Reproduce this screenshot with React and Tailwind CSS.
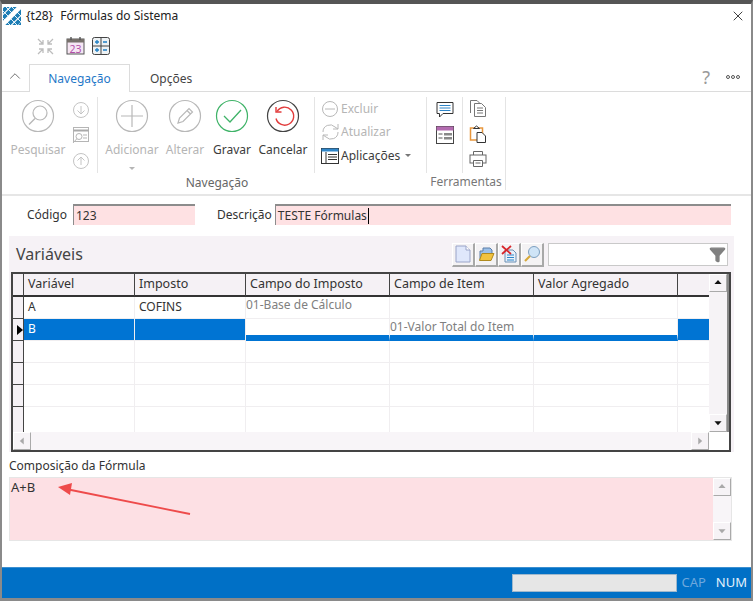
import React from 'react';
import { X, ChevronUp, Filter } from 'lucide-react';

const cols = 'grid grid-cols-[11px_111px_111px_144px_144px_144px_33px]';

// Round ribbon button with its drawing inside the ring
const RoundButton = ({ label, ring, muted, width, children }) => (
  <div className={`${width} flex flex-col items-center shrink-0`}>
    <svg width="34" height="34" viewBox="0 0 34 34" fill="none" className="mt-[6px]">
      <circle cx="17" cy="17" r="15.5" stroke={ring} strokeWidth="1.2" />
      {children}
    </svg>
    <span className={`mt-[9px] text-[12px] leading-[16px] whitespace-nowrap ${muted ? 'text-[#b5b5b5]' : 'text-[#3c3c3c]'}`}>{label}</span>
  </div>
);

const SmallRound = ({ up }) => (
  <svg width="18" height="18" viewBox="0 0 18 18" fill="none" stroke="#c4c4c4" strokeWidth="1">
    <circle cx="9" cy="9" r="7.5" />
    <path d={up ? 'M9 13V5M5.5 8.5 9 5l3.5 3.5' : 'M9 5v8M5.5 9.5 9 13l3.5-3.5'} />
  </svg>
);

const ToolButton = ({ children }) => (
  <div className="w-[23px] h-[24px] flex items-center justify-center bg-[#f4f2f4] border-r-2 border-b-2 border-[#a8a8a8] border-l border-t border-l-white border-t-white">
    {children}
  </div>
);

const HeaderCell = ({ children }) => (
  <div className="h-[23px] bg-[#f5f1f5] border-r border-[#444] border-b-2 border-b-[#333] flex items-center pl-[4px] text-[12.5px] text-[#333] whitespace-nowrap">
    {children}
  </div>
);

const Cell = ({ children, className = '' }) => (
  <div className={`h-[22px] border-r border-b border-[#f0eef0] text-[12px] whitespace-nowrap overflow-hidden ${className}`}>
    {children}
  </div>
);

const ScrollBtn = ({ dir, dark, className = '' }) => {
  const shape = {
    up: 'M5 10l4-4.5 4 4.5z',
    down: 'M5 7l4 4.5L13 7z',
    left: 'M11 5l-4.5 4 4.5 4z',
    right: 'M7 5l4.5 4L7 13z',
  }[dir];
  return (
    <div className={`w-[18px] h-[18px] shrink-0 bg-[#f6f3f6] border border-t-white border-l-white border-r-[#aaa] border-b-[#aaa] ${className}`}>
      <svg width="16" height="16" viewBox="0 0 18 18"><path d={shape} fill={dark ? '#111' : '#a9a9a9'} /></svg>
    </div>
  );
};

const rows = [
  { a: 'A', b: 'COFINS', c: '01-Base de Cálculo' },
  { a: 'B', d: '01-Valor Total do Item', selected: true },
  {}, {}, {},
];

export default function App() {
  return (
    <div className="w-[753px] h-[601px] flex flex-col bg-white border-l-2 border-r-2 border-[#8a8a8a] border-t-[4px] border-t-[#555] border-b-[3px] border-b-[#8a8a8a] overflow-hidden text-[#333] [font-family:'Noto_Sans',sans-serif]">
      {/* Title */}
      <div className="h-[24px] flex items-center shrink-0">
        <svg width="18" height="18" viewBox="0 0 18 18" className="ml-[1px]">
          <rect width="18" height="18" fill="#fff" />
          <path d="M-2 6 6-2M-2 13 13-2M3 20 20 3M10 20l10-10M16 20l4-4" stroke="#1b7cb4" strokeWidth="3.800" />
          <path d="M3 0l15 15M0 4l14 14M9 0l9 9M0 11l7 7" stroke="#fff" strokeWidth="0.900" />
        </svg>
        <span className="ml-[5px] text-[12px] whitespace-nowrap text-[#222]">{'{t28}'}</span>
        <span className="ml-[7px] text-[12px] whitespace-nowrap text-[#222]">Fórmulas do Sistema</span>
        <X size={16} strokeWidth={1.4} className="ml-auto mr-[5px] text-[#333]" />
      </div>

      {/* Quick access */}
      <div className="h-[36px] flex items-center pl-[35px] shrink-0">
        <svg width="17" height="17" viewBox="0 0 17 17" fill="none" stroke="#bdbdbd" strokeWidth="1.3">
          <path d="M1 1l5 5M6 2v4H2M16 1l-5 5M11 2v4h4M1 16l5-5M6 15v-4H2M16 16l-5-5M11 15v-4h4" />
        </svg>
        <svg width="19" height="18" viewBox="0 0 19 18" fill="none" className="ml-[12px]">
          <rect x="1" y="2" width="17" height="15" fill="#f6e6f4" stroke="#555" />
          <rect x="1" y="2" width="17" height="3.500" fill="#77706b" />
          <path d="M5 0v3M14 0v3" stroke="#555" strokeWidth="1.400" />
          <text x="9.500" y="15.500" textAnchor="middle" fontSize="10.500" fill="#b24fa8" fontFamily="Noto Sans">23</text>
        </svg>
        <svg width="18" height="18" viewBox="0 0 18 18" fill="none" className="ml-[7px]">
          <rect x="0.500" y="0.500" width="17" height="17" rx="2" fill="#eef2f4" stroke="#444" />
          <path d="M9 1v16M1 9h16" stroke="#444" />
          <path d="M3 5h4M5 3v4M11 5h4M3 13h4M5 11v4M11 13h4" stroke="#1f7fc4" strokeWidth="1.300" />
        </svg>
      </div>

      {/* Tabs */}
      <div className="h-[28px] flex items-end border-b border-[#dcdcdc] shrink-0 relative">
        <ChevronUp size={18} strokeWidth={1.1} className="ml-[4px] mb-[6px] text-[#555]" />
        <div className="ml-[5px] w-[101px] h-[28px] -mb-px bg-white border border-b-0 border-[#dcdcdc] flex items-center justify-center text-[12px] text-[#1f78c8]">Navegação</div>
        <div className="ml-[20px] h-[28px] pt-[3px] flex items-center text-[12px] text-[#444]">Opções</div>
        <div className="ml-auto mr-[11px] h-[28px] flex items-center gap-[16px]">
          <span className="text-[18px] text-[#9a9a9a]">?</span>
          <span className="flex gap-[1px]">
            <i className="w-[4px] h-[4px] rounded-full border border-[#555]" />
            <i className="w-[4px] h-[4px] rounded-full border border-[#555]" />
            <i className="w-[4px] h-[4px] rounded-full border border-[#555]" />
          </span>
        </div>
      </div>

      {/* Ribbon */}
      <div className="h-[104px] flex border-b-2 border-[#e6e6e6] shrink-0 relative">
        <div className="w-[424px] flex flex-col shrink-0">
          <div className="h-[83px] flex pt-[1px]">
            <RoundButton label="Pesquisar" ring="#b8b8b8" muted width="w-[58px] ml-[7px]">
              <circle cx="19" cy="14" r="7" stroke="#b8b8b8" strokeWidth="1.200" />
              <path d="M14 19.500 8 25.500" stroke="#b8b8b8" strokeWidth="1.400" />
            </RoundButton>
            <div className="w-[30px] pr-[2px] flex flex-col items-center pt-[8px] gap-[7px] shrink-0">
              <SmallRound />
              <svg width="18" height="19" viewBox="0 0 18 19" fill="none" stroke="#b5b5b5">
                <rect x="1.500" y="1.500" width="15" height="14" />
                <path d="M1.500 4.500h15" strokeWidth="2" stroke="#a9a9a9" />
                <circle cx="7" cy="10.500" r="3" />
                <path d="M4.800 12.800 1 17M11 9h4M11 12h4" />
              </svg>
              <SmallRound up />
            </div>
            <div className="w-px h-[76px] bg-[#e4e4e4] mt-[4px] shrink-0" />
            <div className="w-[68px] flex flex-col items-center shrink-0">
              <svg width="34" height="34" viewBox="0 0 34 34" fill="none" className="mt-[6px]">
                <circle cx="17" cy="17" r="15.500" stroke="#b8b8b8" strokeWidth="1.200" />
                <path d="M17 6v22M6 17h22" stroke="#b8b8b8" strokeWidth="1.200" />
              </svg>
              <span className="mt-[9px] text-[12px] leading-[16px] text-[#b5b5b5]">Adicionar</span>
              <svg width="6" height="3" viewBox="0 0 6 3" className="mt-[9px]"><path d="M0 0h6L3 3z" fill="#b5b5b5" /></svg>
            </div>
            <RoundButton label="Alterar" ring="#b8b8b8" muted width="w-[38px]">
              <path d="M10 24l1.500-5L21 9.500l3.500 3.500-9.500 9.500zM19 11.500l3.500 3.500" stroke="#b8b8b8" strokeWidth="1.200" />
            </RoundButton>
            <RoundButton label="Gravar" ring="#3fb368" width="w-[56px]">
              <path d="M9 17l6 6L26 11" stroke="#3fb368" strokeWidth="1.300" />
            </RoundButton>
            <RoundButton label="Cancelar" ring="#444" width="w-[46px]">
              <path d="M11 12.500a9 9 0 1 1-1 7" stroke="#e23b3b" strokeWidth="1.400" />
              <path d="M10 8v5h5.500" stroke="#e23b3b" strokeWidth="1.400" />
            </RoundButton>
            <div className="w-px h-[76px] bg-[#e4e4e4] mt-[4px] ml-[8px] shrink-0" />
            <div className="flex flex-col pl-[6px] pt-[6px] gap-[4px] text-[12px] leading-[19px] shrink-0">
              <div className="flex items-center gap-[2px] text-[#b5b5b5]">
                <svg width="18" height="18" viewBox="0 0 18 18" fill="none" stroke="#b8b8b8"><circle cx="9" cy="9" r="7.500" /><path d="M4 9h10" /></svg>
                Excluir
              </div>
              <div className="flex items-center gap-[1px] text-[#b5b5b5]">
                <svg width="19" height="18" viewBox="0 0 19 18" fill="none" stroke="#b8b8b8"><path d="M2 9a7 7 0 0 1 12-5l3 2M17 9a7 7 0 0 1-12 5l-3-2M17 1v5h-5M2 17v-5h5" /></svg>
                Atualizar
              </div>
              <div className="flex items-center gap-[2px] mt-[1px] text-[#3c3c3c]">
                <svg width="18" height="16" viewBox="0 0 18 16" fill="none"><rect x="0.500" y="0.500" width="17" height="15" fill="#fff" stroke="#333" /><rect x="0.500" y="0.500" width="17" height="3" fill="#2f86c9" /><path d="M5 4v11M7 6.500h9M7 9h9M7 11.500h9" stroke="#333" /></svg>
                Aplicações
                <svg width="6" height="3" viewBox="0 0 6 3" className="ml-[3px]"><path d="M0 0h6L3 3z" fill="#777" /></svg>
              </div>
            </div>
          </div>
          <div className="text-center text-[12px] leading-[16px] text-[#666] pl-[6px]">Navegação</div>
        </div>

        <div className="w-px h-[76px] bg-[#e4e4e4] mt-[5px] shrink-0" />

        <div className="w-[79px] flex flex-col items-center shrink-0 border-r border-[#e4e4e4] mb-[4px] mt-[5px]">
          <div className="h-[79px] flex w-full">
            <div className="w-[35px] flex flex-col items-center pt-[4px] gap-[7px]">
              <svg width="18" height="18" viewBox="0 0 18 18" fill="none"><path d="M1 1.500h16v11H7l-3.500 3.500v-3.500H1z" fill="#fff" stroke="#333" /><path d="M3.500 4.500h11M3.500 7h11M3.500 9.500h11" stroke="#2f86c9" /></svg>
              <svg width="18" height="18" viewBox="0 0 18 18" fill="none"><rect x="0.500" y="0.500" width="17" height="17" fill="#fff" stroke="#444" /><rect x="0.500" y="0.500" width="17" height="4" fill="#b36bb0" /><path d="M2.500 8h4M2.500 12h4" stroke="#555" /><rect x="8" y="7" width="8" height="2.500" fill="#888" /><rect x="8" y="11" width="8" height="2.500" fill="#888" /></svg>
            </div>
            <div className="w-px h-[76px] bg-[#e4e4e4]" />
            <div className="flex-1 flex flex-col items-center pt-[2px] pr-[13px] gap-[7.5px]">
              <svg width="18" height="18" viewBox="0 0 18 18" fill="none" stroke="#777"><path d="M1.500 14V1.500H8L11 4.500" /><path d="M5.500 4.500h7l4 4v9h-11z" fill="#fff" /><path d="M8 9h6M8 11.500h6M8 14h6" /></svg>
              <svg width="18" height="18" viewBox="0 0 18 18" fill="none"><path d="M1.500 3h12v12h-12z" stroke="#e8963c" strokeWidth="1.500" /><path d="M4.500 3.500 7.500 1l3 2.500z" fill="#fff" stroke="#333" /><path d="M8 7.500h5l3.500 3.500v6.500H8z" fill="#fff" stroke="#333" /></svg>
              <svg width="18" height="18" viewBox="0 0 18 18" fill="none" stroke="#666"><path d="M4.500 5V1.500h9V5" /><rect x="1" y="5" width="16" height="8" fill="#fff" /><path d="M4.500 10.500h9v6h-9z" fill="#fff" /><path d="M6.500 13h5" /></svg>
            </div>
          </div>
          <div className="text-[12px] leading-[16px] text-[#777]">Ferramentas</div>
        </div>
      </div>

      {/* Fields */}
      <div className="h-[23px] mt-[7px] flex items-center text-[12px] shrink-0">
        <span className="ml-[25px] text-[#333]">Código</span>
        <div className="ml-[6px] w-[122px] h-[21px] bg-[#fee1e3] border-t-2 border-l border-[#8c8c8c] pl-[2px] leading-[19px]">123</div>
        <span className="ml-[22px] text-[#333]">Descrição</span>
        <div className="ml-[3px] w-[456px] h-[21px] bg-[#fee1e3] border-t-2 border-l border-[#8c8c8c] pl-[2px] leading-[19px] flex">
          TESTE Fórmulas<span className="w-px h-[16px] bg-black ml-[1px] mt-[2px]" />
        </div>
      </div>

      {/* Variáveis */}
      <div className="mt-[10px] ml-[7px] w-[725px] bg-[#f6f2f6] shrink-0 px-[2px]">
        <div className="h-[36px] flex items-center">
          <span className="ml-[5px] text-[16px] text-[#444]">Variáveis</span>
          <div className="ml-auto flex mr-[2px] mt-[1px]">
            <ToolButton>
              <svg width="16" height="18" viewBox="0 0 16 18" fill="none"><path d="M1 1h10l4 4v12H1z" fill="#dfe7fb" stroke="#9aa4c8" /><path d="M11 1v4h4" stroke="#9aa4c8" fill="#fff" /></svg>
            </ToolButton>
            <ToolButton>
              <svg width="17" height="16" viewBox="0 0 17 16" fill="none"><path d="M2 14V5h3V2h7l2 2v3" fill="#9cc0e8" stroke="#5d7fa8" /><path d="M1.500 14.500 4 7.500h12l-3 7z" fill="#f1c23f" stroke="#b08a1e" /></svg>
            </ToolButton>
            <ToolButton>
              <svg width="17" height="18" viewBox="0 0 17 18" fill="none"><path d="M4 5h8l3 3v9H4z" fill="#e8f1fa" stroke="#6a8fb5" /><path d="M6 10h7M6 12.500h7M6 15h7" stroke="#2f86c9" /><path d="M1 1l9 8M10 1 1 9" stroke="#d8262c" strokeWidth="1.800" /></svg>
            </ToolButton>
            <ToolButton>
              <svg width="18" height="18" viewBox="0 0 18 18" fill="none"><circle cx="11" cy="7" r="5.500" fill="#cfe4f7" stroke="#7d9fc0" /><path d="M7 11l-5 5" stroke="#d6a83a" strokeWidth="2.200" /></svg>
            </ToolButton>
          </div>
          <div className="ml-[2px] mr-[4px] w-[180px] h-[23px] bg-white border border-[#c9c9c9] flex items-center justify-end pr-[1px]">
            <Filter size={17} className="text-[#808080] fill-[#808080]" />
          </div>
        </div>

        {/* Grid */}
        <div className="w-[720px] h-[180px] bg-white border-t-2 border-l-2 border-r-2 border-b-2 border-[#444] flex flex-col overflow-hidden">
          <div className="flex flex-1 min-h-0">
            <div className="flex-1 min-w-0 overflow-hidden">
              <div className={cols}>
                <HeaderCell />
                <HeaderCell>Variável</HeaderCell>
                <HeaderCell>Imposto</HeaderCell>
                <HeaderCell>Campo do Imposto</HeaderCell>
                <HeaderCell>Campo de Item</HeaderCell>
                <HeaderCell>Valor Agregado</HeaderCell>
                <div className="h-[23px] bg-[#f5f1f5] border-b-2 border-[#333]" />
              </div>
              {rows.map((r, i) => (
                <div key={i} className={cols}>
                  <div className="h-[22px] bg-[#f5f1f5] border-r border-b border-[#444] flex items-center">
                    {r.selected && <svg width="8" height="10" viewBox="0 0 8 10" className="ml-[3px] shrink-0"><path d="M1 0l6 5-6 5z" fill="#000" /></svg>}
                  </div>
                  <Cell className={`pl-[4px] leading-[20px] ${r.selected ? 'bg-[#0074d3] text-white' : 'text-[#333]'}`}>{r.a}</Cell>
                  <Cell className={`pl-[4px] leading-[20px] ${r.selected ? 'bg-[#0074d3]' : 'text-[#333]'}`}>{r.b}</Cell>
                  <Cell className={`text-[#808080] leading-[16px] ${r.selected ? 'border-b-[6px] border-b-[#0074d3]' : ''}`}>{r.c}</Cell>
                  <Cell className={`text-[#808080] leading-[16px] ${r.selected ? 'border-b-[6px] border-b-[#0074d3]' : ''}`}>{r.d}</Cell>
                  <Cell className={r.selected ? 'border-b-[6px] border-b-[#0074d3]' : ''} />
                  <Cell className={r.selected ? 'bg-[#0074d3]' : ''} />
                </div>
              ))}
              <div className={cols}>
                <div className="h-[26px] bg-[#f5f1f5] border-r border-[#444]" />
                <div className="h-[26px] border-r border-[#f0eef0]" />
                <div className="h-[26px] border-r border-[#f0eef0]" />
                <div className="h-[26px] border-r border-[#f0eef0]" />
                <div className="h-[26px] border-r border-[#f0eef0]" />
                <div className="h-[26px] border-r border-[#f0eef0]" />
                <div className="h-[26px]" />
              </div>
            </div>
            <div className="w-[18px] flex flex-col shrink-0 bg-[#f6f3f6] border-r-2 border-[#888] box-content">
              <ScrollBtn dir="up" dark />
              <div className="flex-1" />
              <ScrollBtn dir="down" dark />
            </div>
          </div>
          <div className="h-[18px] flex shrink-0">
            <div className="flex-1 flex justify-between bg-[#f8f5f8]">
              <ScrollBtn dir="left" />
              <ScrollBtn dir="right" />
            </div>
            <div className="w-[20px] bg-white" />
          </div>
        </div>
      </div>

      {/* Composição */}
      <div className="mt-[5px] ml-[7px] text-[12px] leading-[17px] text-[#333] shrink-0">Composição da Fórmula</div>
      <div className="mt-[3px] ml-[7px] w-[723px] h-[64px] bg-[#fde0e4] border border-[#e6e6e6] flex shrink-0 relative">
        <span className="flex-1 pl-[1px] text-[13px] leading-[18px] text-[#333]">A+B</span>
        <div className="w-[18px] flex flex-col bg-[#f8f5f8]">
          <ScrollBtn dir="up" />
          <div className="flex-1" />
          <ScrollBtn dir="down" />
        </div>
        {/* red annotation arrow */}
        <svg width="140" height="34" viewBox="0 0 140 34" fill="none" className="absolute left-[46px] top-[5px]">
          <path d="M134 31 10 6" stroke="#ee4b4b" strokeWidth="1.800" />
          <path d="M2 4 16 0l-2 12z" fill="#ee4b4b" />
        </svg>
      </div>

      {/* Status bar */}
      <div className="mt-auto h-[31px] bg-[#0070c6] border-t border-[#3c8fd0] flex items-center justify-end pr-[4px] shrink-0">
        <div className="w-[165px] h-[18px] bg-[#e6e6e6] border border-[#9fb8cc]" />
        <span className="ml-[4px] text-[13px] text-[#6ea8dd]">CAP</span>
        <span className="ml-[10px] text-[13px] text-[#e4f0fb]">NUM</span>
      </div>
    </div>
  );
}
